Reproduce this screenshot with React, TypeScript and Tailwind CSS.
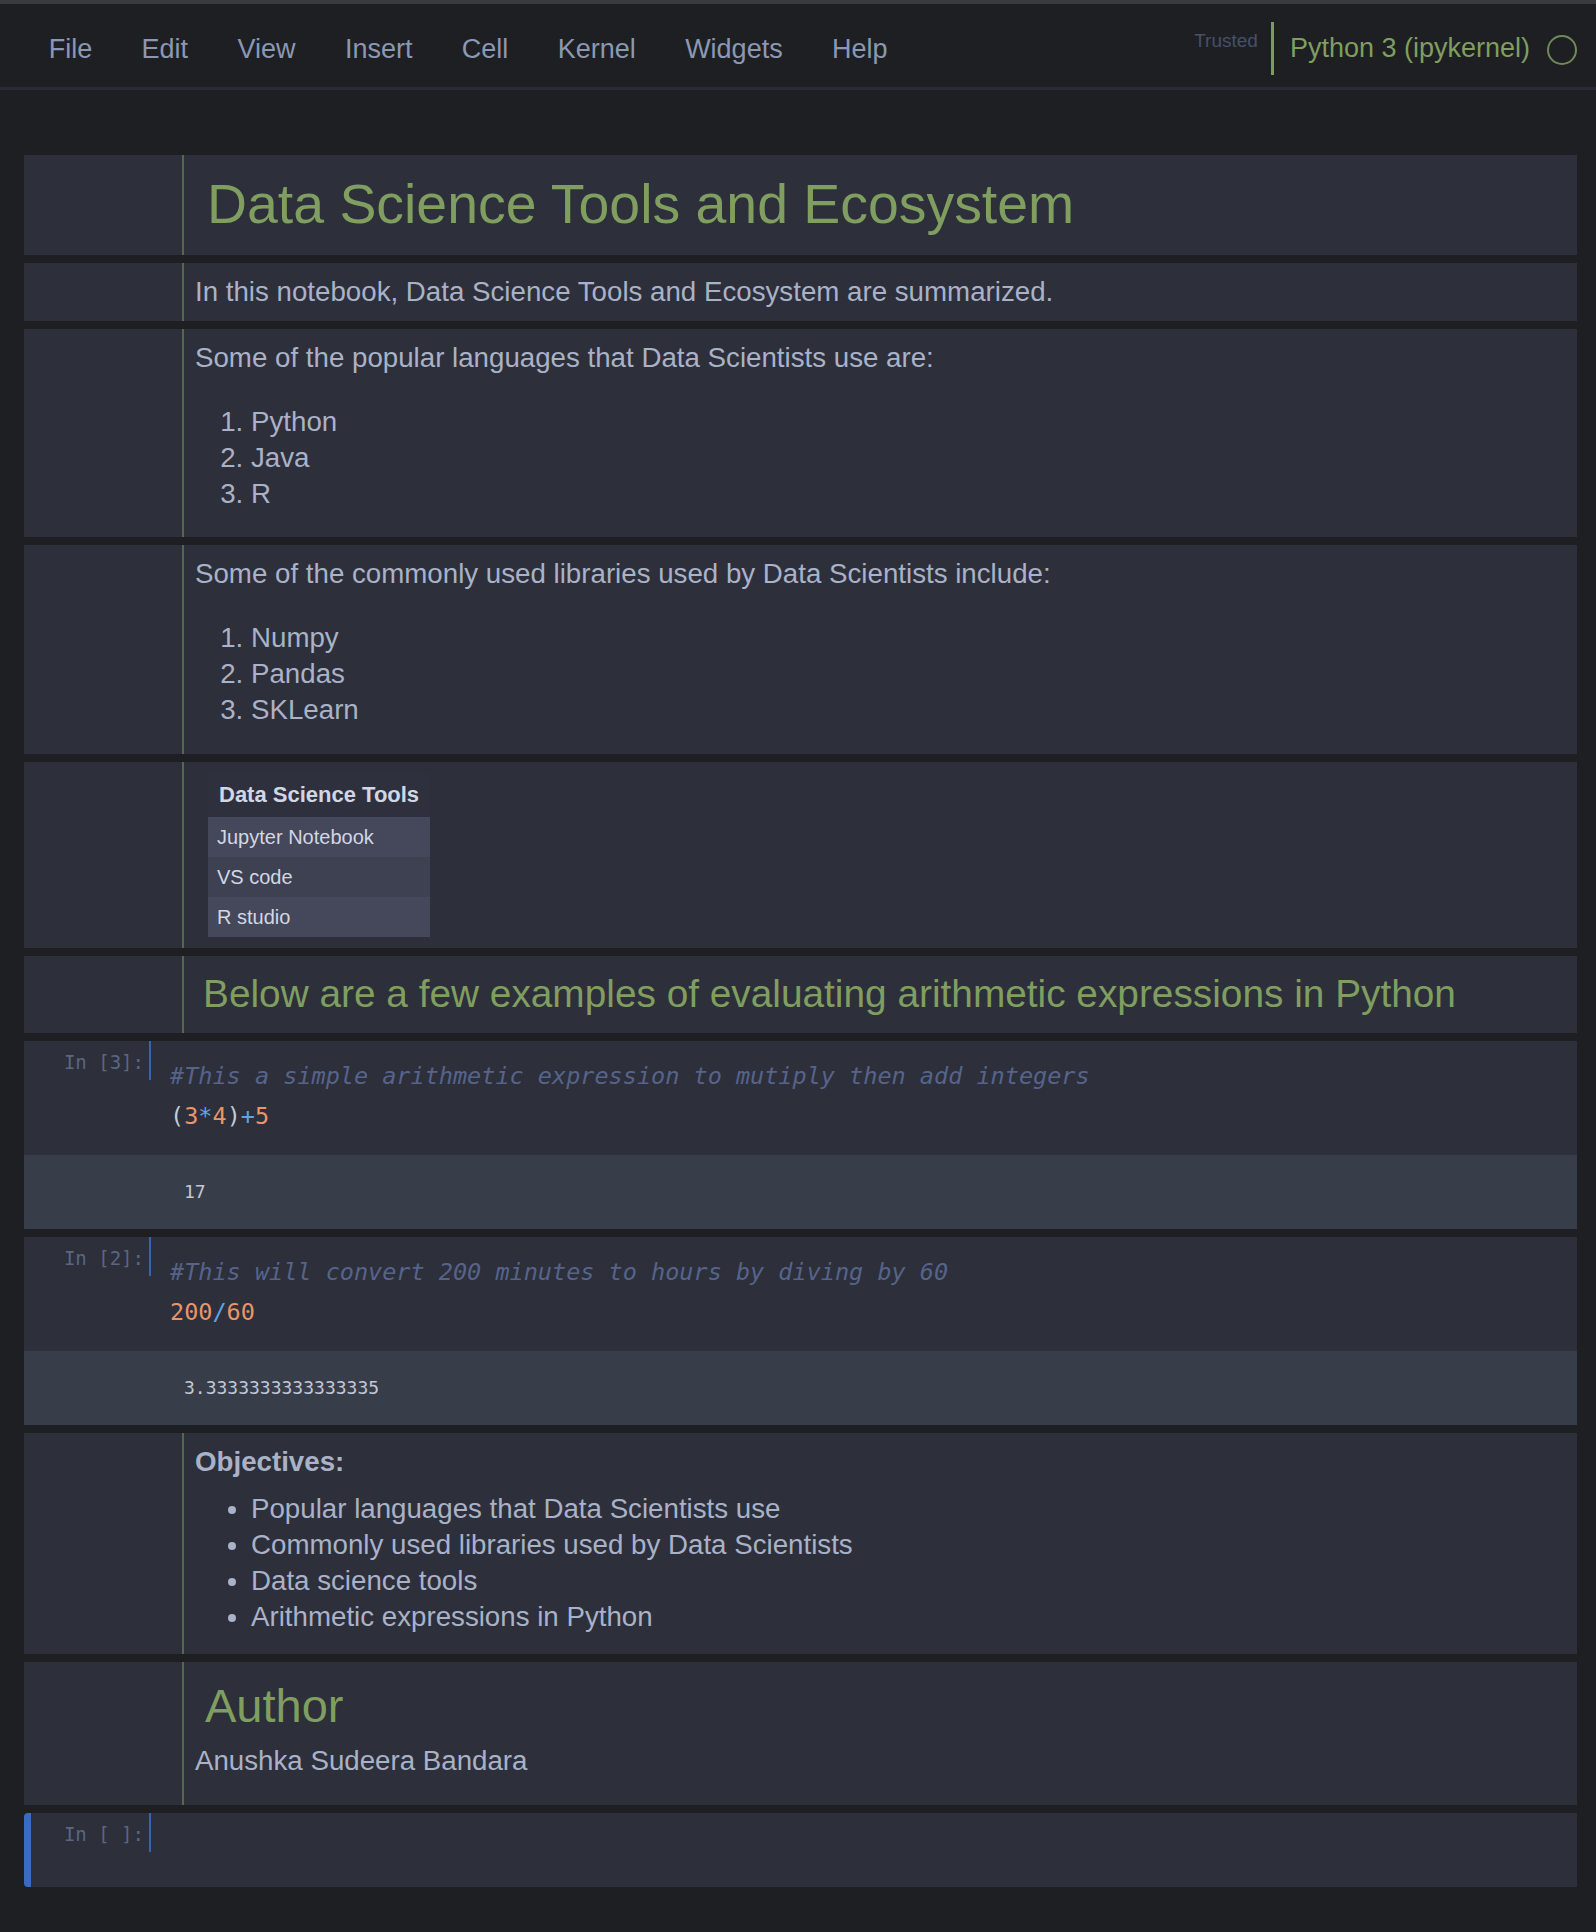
import React from "react";

const menu = ["File", "Edit", "View", "Insert", "Cell", "Kernel", "Widgets", "Help"];

function MdCell({ children, className }: { children: React.ReactNode; className: string }) {
  return (
    <div className="flex bg-[#2d2f3b]">
      <div className="w-[158px] shrink-0" />
      <div className={"flex-1 border-l-2 border-[#56684b] pl-[11px] " + className}>{children}</div>
    </div>
  );
}

function CodeCell({
  prompt,
  lines,
  output,
  active,
}: {
  prompt: string;
  lines?: React.ReactNode;
  output?: string;
  active?: boolean;
}) {
  return (
    <div
      className={
        "bg-[#2d2f3b] " + (active ? "h-[74px] rounded-l-[4px] border-l-[7px] border-[#3a6bc4]" : "")
      }
    >
      <div className="flex">
        <div
          className={
            "shrink-0 pr-[5px] pt-[9px] text-right font-['DejaVu_Sans_Mono',monospace] text-[19px] leading-[24px] whitespace-pre text-[#5b6680] " +
            (active ? "w-[118px]" : "w-[125px]")
          }
        >
          {prompt}
        </div>
        <div className="h-[39px] w-[2px] shrink-0 bg-[#3b63ad]" />
        {lines ? (
          <div className="pb-[19px] pl-[19px] pt-[15px] font-['DejaVu_Sans_Mono',monospace] text-[23.5px] leading-[40px] whitespace-pre">
            {lines}
          </div>
        ) : null}
      </div>
      {output ? (
        <div className="bg-[#383d4a] py-[25px] pl-[160px] font-['DejaVu_Sans_Mono',monospace] text-[18px] leading-[24px] text-[#c3c8d6]">
          {output}
        </div>
      ) : null}
    </div>
  );
}

export default function App() {
  return (
    <div className="min-h-[1932px] bg-[#1e1f23] font-['Liberation_Sans',Arial,sans-serif] text-[27.7px] text-[#a9b2c7]">
      <div className="h-[4px] bg-[#3a3b3f]" />
      <header className="flex h-[86px] items-start border-b-[3px] border-[#2a2c35] pl-[24px] pr-[19px]">
        <nav className="flex pt-[29px] text-[27px] leading-[32px] text-[#8b98b3]">
          {menu.map((m) => (
            <span key={m} className="px-[24.7px]">
              {m}
            </span>
          ))}
        </nav>
        <div className="ml-auto flex items-start">
          <span className="mt-[25px] text-[19px] leading-[24px] text-[#46506a]">Trusted</span>
          <div className="ml-[13px] mt-[18px] h-[53px] w-[3px] bg-[#7d9b5e]" />
          <span className="ml-[16px] mt-[28px] text-[27px] leading-[32px] text-[#7f9e5f]">Python 3 (ipykernel)</span>
          <div className="ml-[17px] mt-[31px] h-[30px] w-[30px] rounded-full border-2 border-[#6f8a58]" />
        </div>
      </header>

      <main className="flex flex-col gap-[8px] pb-[46px] pl-[24px] pr-[19px] pt-[65px]">
        <MdCell className="pb-[13px] pt-[11px]">
          <h1 className="ml-[12px] text-[55.4px] leading-[76px] text-[#7f9e5f]">Data Science Tools and Ecosystem</h1>
        </MdCell>

        <MdCell className="pb-[11px] pt-[11px]">
          <p className="leading-[36px]">In this notebook, Data Science Tools and Ecosystem are summarized.</p>
        </MdCell>

        <MdCell className="pb-[11px] pt-[11px]">
          <p className="mb-[28px] leading-[36px]">Some of the popular languages that Data Scientists use are:</p>
          <ol className="mb-[14px] list-decimal pl-[56px] leading-[36px]">
            <li>Python</li>
            <li>Java</li>
            <li>R</li>
          </ol>
        </MdCell>

        <MdCell className="pb-[11px] pt-[11px]">
          <p className="mb-[28px] leading-[36px]">Some of the commonly used libraries used by Data Scientists include:</p>
          <ol className="mb-[15px] list-decimal pl-[56px] leading-[36px]">
            <li>Numpy</li>
            <li>Pandas</li>
            <li>SKLearn</li>
          </ol>
        </MdCell>

        <MdCell className="pb-[11px] pt-[11px]">
          <table className="ml-[13px] border-collapse text-[#d3d6e4]">
            <thead>
              <tr className="bg-[#2e313d]">
                <th className="px-[11px] text-left text-[22px] font-bold leading-[44px]">Data Science Tools</th>
              </tr>
            </thead>
            <tbody className="text-[20px] leading-[40px]">
              <tr className="bg-[#44485a]">
                <td className="px-[9px]">Jupyter Notebook</td>
              </tr>
              <tr className="bg-[#3d4152]">
                <td className="px-[9px]">VS code</td>
              </tr>
              <tr className="bg-[#44485a]">
                <td className="px-[9px]">R studio</td>
              </tr>
            </tbody>
          </table>
        </MdCell>

        <MdCell className="pb-[13px] pt-[11px]">
          <h3 className="ml-[8px] text-[38.8px] leading-[53px] text-[#7f9e5f]">
            Below are a few examples of evaluating arithmetic expressions in Python
          </h3>
        </MdCell>

        <CodeCell
          prompt="In [3]:"
          lines={
            <>
              <div className="italic text-[#56648a]">#This a simple arithmetic expression to mutiply then add integers</div>
              <div>
                <span className="text-[#c5c9d6]">(</span>
                <span className="text-[#e8956a]">3</span>
                <span className="text-[#5ea3e6]">*</span>
                <span className="text-[#e8956a]">4</span>
                <span className="text-[#c5c9d6]">)</span>
                <span className="text-[#5ea3e6]">+</span>
                <span className="text-[#e8956a]">5</span>
              </div>
            </>
          }
          output="17"
        />

        <CodeCell
          prompt="In [2]:"
          lines={
            <>
              <div className="italic text-[#56648a]">#This will convert 200 minutes to hours by diving by 60</div>
              <div>
                <span className="text-[#e8956a]">200</span>
                <span className="text-[#5ea3e6]">/</span>
                <span className="text-[#e8956a]">60</span>
              </div>
            </>
          }
          output="3.3333333333333335"
        />

        <MdCell className="pb-[11px] pt-[11px]">
          <p className="font-bold leading-[36px]">Objectives:</p>
          <ul className="mb-[8px] mt-[11px] list-disc pl-[56px] leading-[36px]">
            <li>Popular languages that Data Scientists use</li>
            <li>Commonly used libraries used by Data Scientists</li>
            <li>Data science tools</li>
            <li>Arithmetic expressions in Python</li>
          </ul>
        </MdCell>

        <MdCell className="pb-[11px] pt-[11px]">
          <h2 className="ml-[10px] text-[47px] leading-[65px] text-[#7f9e5f]">Author</h2>
          <p className="mb-[15px] mt-[5px] leading-[36px]">Anushka Sudeera Bandara</p>
        </MdCell>

        <CodeCell prompt="In [ ]:" active />
      </main>
    </div>
  );
}
